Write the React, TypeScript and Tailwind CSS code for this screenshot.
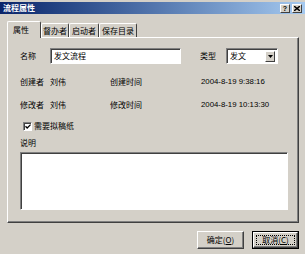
const cjk = "font-['SimSun','Noto_Sans_CJK_SC',sans-serif]";

const tabs = [
  { label: "督办者", w: "w-[28px]" },
  { label: "启动者", w: "w-[30px]" },
  { label: "保存目录", w: "w-[38px]" },
];

function Sunken({ className, children }: { className: string; children?: React.ReactNode }) {
  return (
    <div
      className={`border-t border-l border-[#808080] border-r border-b border-r-white border-b-white shadow-[inset_1px_1px_0_#404040] bg-white ${className}`}
    >
      {children}
    </div>
  );
}

function Button({ label, hot, isDefault }: { label: string; hot: string; isDefault?: boolean }) {
  return (
    <div className={`w-[47px] h-[18px] flex ${isDefault ? "border border-black" : ""}`}>
      <div className="flex-1 border-t border-l border-white border-r border-b border-r-[#404040] border-b-[#404040] shadow-[inset_-1px_-1px_0_#808080] flex p-[2px]">
        <div
          className={`flex-1 flex items-center justify-center ${
            isDefault ? "border border-dotted border-black" : ""
          }`}
        >
          <span className="text-[8px] leading-[10px] text-black whitespace-nowrap">
            {label}(<span className="underline">{hot}</span>)
          </span>
        </div>
      </div>
    </div>
  );
}

export default function App() {
  return (
    <div className={`w-[305px] h-[254px] bg-[#d4d0c8] flex flex-col pt-[2px] ${cjk}`}>
      {/* Title bar */}
      <div className="h-[12px] bg-gradient-to-r from-[#0a246a] to-[#a6caf0] flex items-center pl-[3px] pr-[3px]">
        <span className="text-white font-bold text-[8px] leading-[10px] flex-1">流程属性</span>
        <div className="w-[10px] h-[9px] bg-[#d4d0c8] border-t border-l border-white border-r border-b border-r-[#404040] border-b-[#404040] flex items-center justify-center">
          <span className="text-[7px] leading-[7px] font-bold text-black font-['Liberation_Sans',sans-serif]">?</span>
        </div>
        <div className="w-[10px] h-[9px] ml-[2px] bg-[#d4d0c8] border-t border-l border-white border-r border-b border-r-[#404040] border-b-[#404040] flex items-center justify-center">
          <svg width="6" height="5" viewBox="0 0 6 5">
            <path d="M0 0 L6 5 M6 0 L0 5" stroke="black" strokeWidth="1.4" />
          </svg>
        </div>
      </div>

      {/* Tabs */}
      <div className="flex items-end ml-[7px] mt-[7px] h-[16px] relative z-10">
        <div className="w-[34px] h-[17px] -mb-px bg-[#d4d0c8] border-t border-l border-white border-r border-r-[#404040] rounded-t-[2px] flex items-center pl-[5px]">
          <span className="text-[8px] leading-[10px] text-black">属性</span>
        </div>
        {tabs.map((t) => (
          <div
            key={t.label}
            className={`${t.w} h-[14px] border-t border-l border-white border-r border-r-[#404040] rounded-t-[2px] flex items-center justify-center`}
          >
            <span className="text-[8px] leading-[10px] text-black">{t.label}</span>
          </div>
        ))}
      </div>

      {/* Panel */}
      <div className="ml-[7px] w-[292px] h-[186px] border-t border-l border-white border-r border-b border-r-[#404040] border-b-[#404040] shadow-[inset_-1px_-1px_0_#808080] pl-[12px] pt-[10px] text-[8px] leading-[12px] text-black">
        <div className="flex items-center h-[16px]">
          <span className="w-[30px]">名称</span>
          <Sunken className="w-[131px] h-[16px] flex items-center pl-[3px]">
            <span>发文流程</span>
          </Sunken>
          <span className="w-[26px] ml-[19px]">类型</span>
          <Sunken className="w-[52px] h-[16px] flex items-center pl-[3px] pr-[2px]">
            <span className="flex-1">发文</span>
            <div className="w-[10px] h-[11px] bg-[#d4d0c8] border-t border-l border-white border-r border-b border-r-[#404040] border-b-[#404040] flex items-center justify-center">
              <svg width="5" height="3" viewBox="0 0 5 3">
                <path d="M0 0 H5 L2.5 3 Z" fill="black" />
              </svg>
            </div>
          </Sunken>
        </div>

        <div className="flex items-center h-[12px] mt-[12px]">
          <span className="w-[30px]">创建者</span>
          <span className="w-[60px]">刘伟</span>
          <span className="w-[91px]">创建时间</span>
          <span className="font-['Liberation_Sans',sans-serif] text-[7.8px]">2004-8-19 9:38:16</span>
        </div>

        <div className="flex items-center h-[12px] mt-[11px]">
          <span className="w-[30px]">修改者</span>
          <span className="w-[60px]">刘伟</span>
          <span className="w-[91px]">修改时间</span>
          <span className="font-['Liberation_Sans',sans-serif] text-[7.8px]">2004-8-19 10:13:30</span>
        </div>

        <div className="flex items-center h-[12px] mt-[9px] pl-[3px]">
          <Sunken className="w-[9px] h-[9px] flex items-center justify-center">
            <svg width="6" height="5" viewBox="0 0 6 5">
              <path d="M0.5 2.2 L2.2 4 L5.6 0.6" stroke="black" strokeWidth="1.3" fill="none" />
            </svg>
          </Sunken>
          <span className="ml-[2px]">需要拟稿纸</span>
        </div>

        <div className="h-[12px] mt-[5px]">说明</div>

        <Sunken className="w-[268px] h-[58px] mt-[3px]" />
      </div>

      {/* Buttons */}
      <div className="flex justify-end gap-[8px] mt-[8px] mr-[6px]">
        <Button label="确定" hot="O" />
        <Button label="取消" hot="C" isDefault />
      </div>
    </div>
  );
}
